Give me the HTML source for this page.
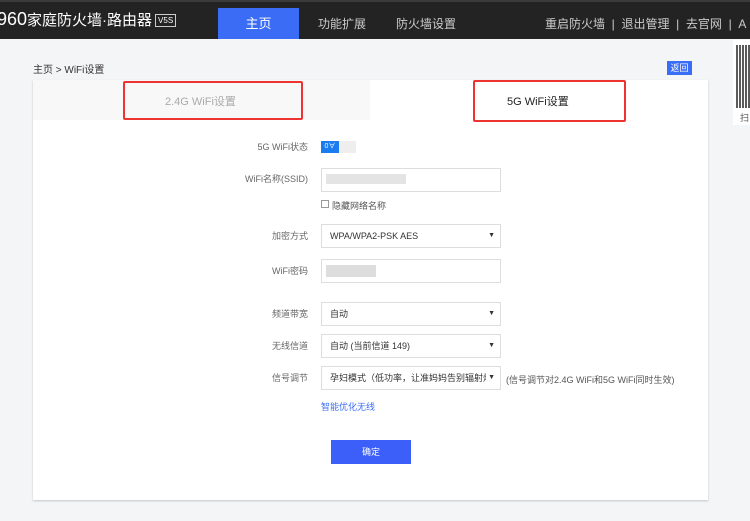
<!DOCTYPE html>
<html><head><meta charset="utf-8"><style>
*{margin:0;padding:0;box-sizing:border-box}
body{width:750px;height:521px;overflow:hidden;background:#f4f5f7;font-family:"Liberation Sans","Noto Sans CJK SC",sans-serif;position:relative;color:#333}
.hd{position:absolute;left:0;top:0;width:750px;height:39px;background:#232323;border-top:2px solid #3a3a3a}
.a{position:absolute;white-space:nowrap}
.logo{left:-3px;top:9px;color:#fff;font-size:15px}
.v{display:inline-block;border:1px solid #ccc;font-size:8px;padding:0 2px;line-height:11px;vertical-align:2px;margin-left:3px}
.tab{left:218px;top:8px;width:81px;height:31px;background:#3b6cf6;color:#fff;font-size:13px;text-align:center;line-height:31px}
.nav{color:#ccc;font-size:12px;top:15px}
.card{left:33px;top:80px;width:675px;height:420px;background:#fff;box-shadow:0 1px 2px rgba(0,0,0,.2)}
.lt{left:33px;top:80px;width:337px;height:40px;background:#f8f8f8}
.rb{border:2px solid #e33;border-radius:2px}
.lb{font-size:9px;color:#666;text-align:right;width:120px;left:188px}
.in{left:321px;width:180px;height:24px;border:1px solid #ddd;background:#fff;font-size:9px;padding-left:8px;padding-right:18px;line-height:22px;color:#333;overflow:hidden}
.sel:after{content:"▼";position:absolute;right:5px;top:0;font-size:7px;background:#fff;padding-left:2px}
.blur{position:absolute;background:#ddd;height:10px}
</style></head><body>
<div class="hd"></div>
<div class="a logo"><span style="font-size:18px;letter-spacing:0">960</span>家庭防火墙·路由器<span class="v">V5S</span></div>
<div class="a tab">主页</div>
<div class="a nav" style="left:318px">功能扩展</div>
<div class="a nav" style="left:396px">防火墙设置</div>
<div class="a nav" style="left:545px">重启防火墙 &nbsp;| &nbsp;退出管理 &nbsp;| &nbsp;去官网 &nbsp;| &nbsp;A</div>
<div class="a" style="left:733px;top:40px;width:17px;height:85px;background:#fff"></div>
<div class="a" style="left:736px;top:45px;width:14px;height:63px;background:repeating-linear-gradient(90deg,#333 0 2px,#fff 2px 3px),#333;opacity:.8"></div>
<div class="a" style="left:740px;top:111px;font-size:9px;color:#555">扫</div>
<div class="a" style="left:33px;top:61px;font-size:10px">主页 &gt; WiFi设置</div>
<div class="a" style="left:667px;top:61px;width:25px;height:14px;background:#3b6cf6;color:#fff;font-size:9px;text-align:center;line-height:14px">返回</div>
<div class="a card"></div>
<div class="a lt"></div>
<div class="a" style="left:165px;top:93px;font-size:11px;color:#aaa">2.4G WiFi设置</div>
<div class="a" style="left:507px;top:93px;font-size:11px;color:#222">5G WiFi设置</div>
<div class="a rb" style="left:123px;top:81px;width:180px;height:39px"></div>
<div class="a rb" style="left:473px;top:80px;width:153px;height:42px"></div>

<div class="a lb" style="top:140px">5G WiFi状态</div>
<div class="a" style="left:321px;top:141px;width:35px;height:12px;background:#eee"></div>
<div class="a" style="left:321px;top:141px;width:18px;height:12px;background:#1a7cf0;color:#fff;font-size:7px;text-align:center;line-height:12px">0∀</div>
<div class="a lb" style="top:172px">WiFi名称(SSID)</div>
<div class="a in" style="top:168px"></div>
<div class="blur" style="left:326px;top:174px;width:80px;opacity:.8"></div>
<div class="a" style="left:321px;top:200px;width:8px;height:8px;border:1px solid #999"></div>
<div class="a" style="left:332px;top:199px;font-size:9px;color:#555">隐藏网络名称</div>
<div class="a lb" style="top:229px">加密方式</div>
<div class="a in sel" style="top:224px">WPA/WPA2-PSK AES</div>
<div class="a lb" style="top:264px">WiFi密码</div>
<div class="a in" style="top:259px"></div>
<div class="blur" style="left:326px;top:265px;width:50px;height:12px"></div>
<div class="a lb" style="top:307px">频道带宽</div>
<div class="a in sel" style="top:302px">自动</div>
<div class="a lb" style="top:339px">无线信道</div>
<div class="a in sel" style="top:334px">自动 (当前信道 149)</div>
<div class="a lb" style="top:371px">信号调节</div>
<div class="a in sel" style="top:366px">孕妇模式（低功率，让准妈妈告别辐射烦</div>
<div class="a" style="left:506px;top:373px;font-size:9px;color:#555">(信号调节对2.4G WiFi和5G WiFi同时生效)</div>
<div class="a" style="left:321px;top:400px;font-size:9px;color:#3b6cf6">智能优化无线</div>
<div class="a" style="left:331px;top:440px;width:80px;height:24px;background:#3b5ff8;color:#fff;font-size:9px;text-align:center;line-height:24px">确定</div>
</body></html>
